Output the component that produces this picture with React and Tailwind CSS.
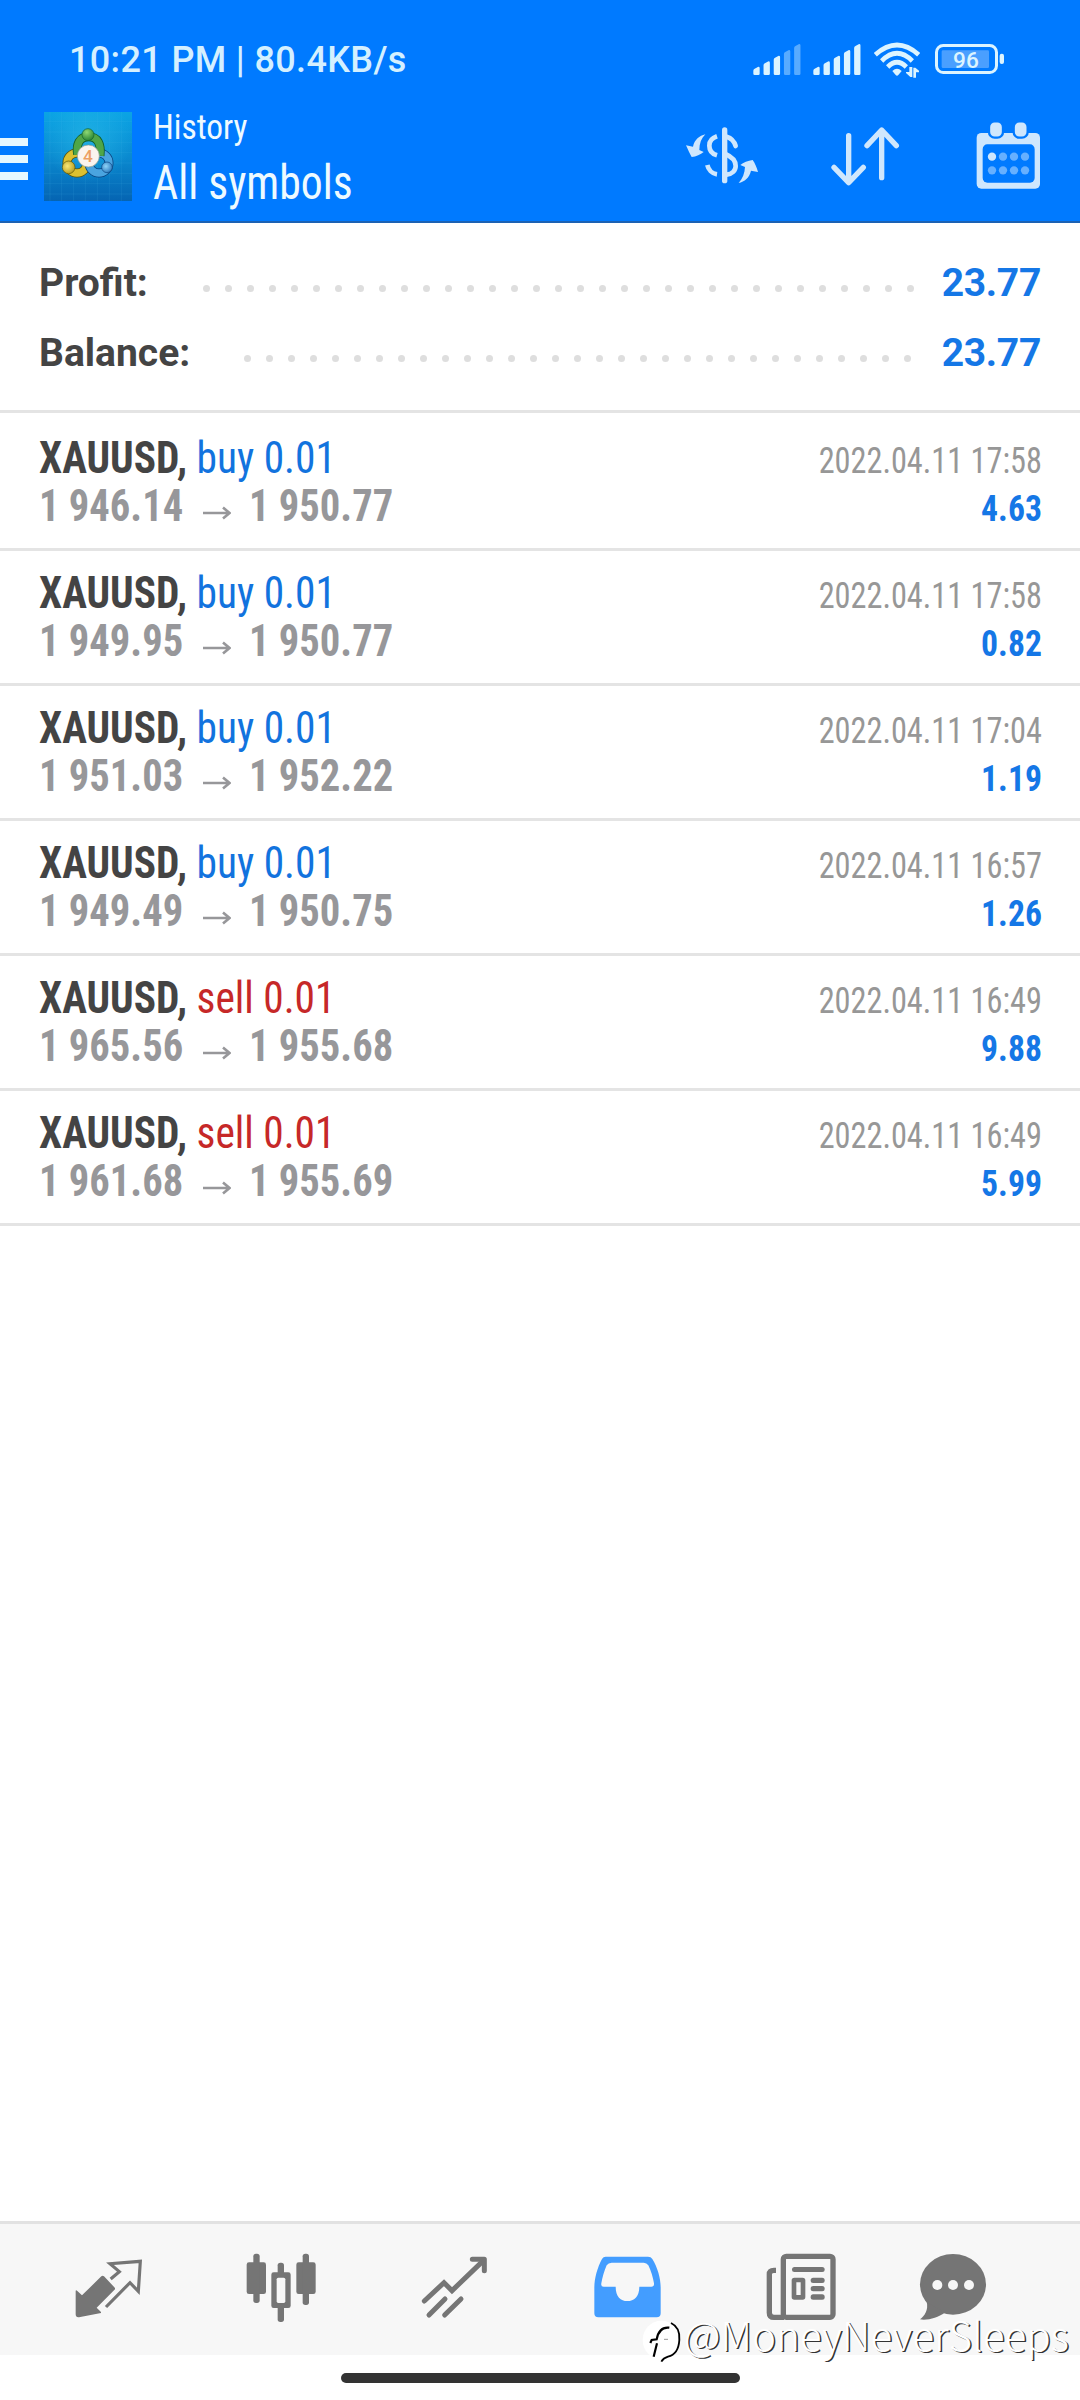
const deals = [
  { type: "buy", from: "1 946.14", to: "1 950.77", time: "2022.04.11 17:58", profit: "4.63" },
  { type: "buy", from: "1 949.95", to: "1 950.77", time: "2022.04.11 17:58", profit: "0.82" },
  { type: "buy", from: "1 951.03", to: "1 952.22", time: "2022.04.11 17:04", profit: "1.19" },
  { type: "buy", from: "1 949.49", to: "1 950.75", time: "2022.04.11 16:57", profit: "1.26" },
  { type: "sell", from: "1 965.56", to: "1 955.68", time: "2022.04.11 16:49", profit: "9.88" },
  { type: "sell", from: "1 961.68", to: "1 955.69", time: "2022.04.11 16:49", profit: "5.99" },
];

/* ================= STATUS ICONS ================= */
function Signal({ level }) {
  const tops = [140, 124, 107, 90, 72];
  return (
    <svg viewBox="279 60 144 120" className="w-[48px] h-[40px] fill-[#dcf4ff]">
      {tops.map((y, i) => {
        const x = 280 + i * 30.6;
        return (
          <path
            key={y}
            d={`M${x} ${y + 12} Q${x} ${y + 8} ${x + 4} ${y + 6} L${x + 15} ${y} Q${x + 19} ${y} ${x + 19} ${y + 4} V161 Q${x + 19} 165 ${x + 15} 165 H${x + 4} Q${x} 165 ${x} 161 Z`}
            opacity={i < level ? 1 : 0.4}
          />
        );
      })}
    </svg>
  );
}

function Wifi() {
  return (
    <svg viewBox="642 60 138 120" className="w-[46px] h-[40px]">
      <g fill="none" stroke="#dcf4ff" strokeWidth="14">
        <path d="M646 104 Q711 46 776 104" />
        <path d="M665 123 Q711 77 757 123" />
        <path d="M683 141 Q711 113 739 141" />
      </g>
      <path d="M697 153 Q711 140 725 153 L715 165 Q711 169 707 165 Z" fill="#dcf4ff" />
      <path d="M757 141 V171 H751 L738 159 V156 H748 V141 Z M760 173 V143 H766 L777 152 V157 H768 V173 Z" fill="#dcf4ff" />
    </svg>
  );
}

function Battery() {
  return (
    <svg viewBox="825 60 210 120" className="w-[70px] h-[40px]">
      <rect x="829.5" y="76.5" width="180" height="81" rx="20" fill="none" stroke="#dcf4ff" strokeWidth="9" />
      <rect x="845" y="91" width="142" height="53" rx="4" fill="#4a9fff" />
      <rect x="1019" y="101" width="13" height="31" rx="6" fill="#dcf4ff" />
      <text x="918" y="143" textAnchor="middle" fontFamily="Roboto" fontWeight="500" fontSize="68" fill="#dcf4ff">
        96
      </text>
    </svg>
  );
}

/* ================= HEADER ICONS ================= */
function AppLogo() {
  return (
    <svg viewBox="42 37 264 267" className="mt-[32px] w-[88px] h-[89px]">
      <defs>
        <linearGradient id="sky" x1="0" y1="0" x2="0" y2="1">
          <stop offset="0" stopColor="#0ba4e4" />
          <stop offset="0.5" stopColor="#0a8ad0" />
          <stop offset="1" stopColor="#0564b2" />
        </linearGradient>
        <radialGradient id="glow" cx="0.5" cy="0.3" r="0.5">
          <stop offset="0" stopColor="#2cbce8" stopOpacity="0.6" />
          <stop offset="1" stopColor="#2cbce8" stopOpacity="0" />
        </radialGradient>
        <radialGradient id="green" cx="0.4" cy="0.3" r="0.8">
          <stop offset="0" stopColor="#8fd873" />
          <stop offset="1" stopColor="#1c7a2c" />
        </radialGradient>
        <radialGradient id="gold" cx="0.4" cy="0.4" r="0.8">
          <stop offset="0" stopColor="#f8e878" />
          <stop offset="1" stopColor="#a88a08" />
        </radialGradient>
        <radialGradient id="blue" cx="0.4" cy="0.4" r="0.8">
          <stop offset="0" stopColor="#8fd4f8" />
          <stop offset="1" stopColor="#1464b0" />
        </radialGradient>
      </defs>
      <rect x="42" y="37" width="264" height="267" fill="url(#sky)" />
      <rect x="42" y="37" width="264" height="267" fill="url(#glow)" />
      <path
        d="M60 37V304 M95 37V304 M131 37V304 M166 37V304 M202 37V304 M238 37V304 M274 37V304 M42 66H306 M42 97H306 M42 128H306 M42 159H306 M42 190H306 M42 221H306 M42 252H306 M42 283H306"
        stroke="#4cc0ec"
        strokeOpacity="0.25"
        strokeWidth="1.5"
      />
      <g fill="none">
        <circle cx="141" cy="190" r="30" stroke="#5c5408" strokeWidth="27" />
        <circle cx="141" cy="190" r="30" stroke="#dcc030" strokeWidth="22" />
        <circle cx="207" cy="190" r="30" stroke="#0a4480" strokeWidth="27" />
        <circle cx="207" cy="190" r="30" stroke="#4aa4e0" strokeWidth="22" />
        <path d="M143 164 C138 134 148 111 176 111 C204 111 214 134 210 168" stroke="#14602c" strokeWidth="27" />
        <path d="M143 164 C138 134 148 111 176 111 C204 111 214 134 210 168" stroke="#4fa648" strokeWidth="22" />
      </g>
      <circle cx="174" cy="105" r="18" fill="url(#green)" stroke="#14602c" strokeWidth="2" />
      <circle cx="116" cy="203" r="19" fill="url(#gold)" stroke="#5c5408" strokeWidth="2" />
      <circle cx="231" cy="203" r="16" fill="url(#blue)" stroke="#0a4480" strokeWidth="2" />
      <circle cx="175" cy="169" r="33" fill="#fbf4ee" stroke="#8c9c90" strokeWidth="2" />
      <text x="174" y="188" textAnchor="middle" fontFamily="Roboto" fontWeight="500" fontSize="52" fill="#eda064">
        4
      </text>
    </svg>
  );
}

function CurrencyIcon() {
  return (
    <svg viewBox="75 285 225 240" className="w-[75px] h-[80px] mt-[35px]">
      <rect x="186" y="322" width="16" height="168" rx="8" fill="#cfe7fd" />
      <g fill="none" stroke="#cfe7fd" strokeWidth="14">
        <path d="M171 349 C153 355 148 366 148 377 C148 391 157 402 171 406" />
        <path d="M142 435 C145 449 156 461 171 463" strokeLinecap="butt" />
        <path d="M200 350 C213 354 223 364 227 378" strokeLinecap="round" />
        <path d="M196 402 C220 412 227 424 227 438 C227 452 216 462 200 464" />
      </g>
      <g fill="#cfe7fd">
        <path d="M136 343 C118 348 104 358 99 380 L78 376 C84 390 90 402 95 411 C108 410 122 404 131 396 L118 390 C118 370 124 355 136 343Z" />
        <path d="M236 489 C254 484 268 474 273 452 L294 456 C290 442 285 430 278 420 C264 422 250 427 241 435 L255 441 C254 460 248 476 236 489Z" />
      </g>
    </svg>
  );
}

function SortIcon() {
  return (
    <svg viewBox="510 285 210 240" className="w-[70px] h-[80px] mt-[35px]">
      <g fill="none" stroke="#cfe7fd" strokeWidth="16" strokeLinecap="round" strokeLinejoin="round">
        <path d="M566 347 V487 M522 442 L566 488 L610 442" />
        <path d="M665 473 V331 M621 377 L665 330 L709 377" />
      </g>
    </svg>
  );
}

function CalendarIcon() {
  return (
    <svg viewBox="945 285 198 240" className="w-[66px] h-[80px] mt-[35px]">
      <rect x="950" y="339" width="190" height="167" rx="14" fill="#cfe7fd" />
      <rect x="968" y="373" width="156" height="115" rx="14" fill="#007aff" />
      <g fill="#cfe7fd" stroke="#007aff" strokeWidth="7">
        <rect x="987" y="304" width="42" height="49" rx="17" />
        <rect x="1061" y="304" width="42" height="49" rx="17" />
      </g>
      {[996, 1029, 1062, 1095].map((x) => (
        <g key={x} fill="#66b0ff">
          <circle cx={x} cy="410" r="12.5" fill={x === 996 ? "#cfe7fd" : "#66b0ff"} />
          <circle cx={x} cy="451" r="12.5" />
        </g>
      ))}
    </svg>
  );
}

/* ================= BOTTOM NAV ICONS ================= */
function QuotesIcon() {
  return (
    <svg viewBox="39 60 216 216" className="size-[72px]">
      <path
        d="M47 184 Q47 178 52 183 L66 196 L124 139 Q128 135 132 139 L165 174 V178 L110 233 L123 246 V249 L57 262 Q47 263 47 253 Z"
        fill="#757575"
      />
      <path d="M152 147 L178 125 L150 101 L241 94 L235 184 L210 158 L138 231" fill="none" stroke="#757575" strokeWidth="9.5" />
    </svg>
  );
}

function ChartIcon() {
  return (
    <svg viewBox="558 60 216 216" className="size-[72px] fill-[#757575]">
      <rect x="560" y="97" width="58" height="95" rx="7" />
      <rect x="580" y="71" width="19" height="148" rx="8" />
      <rect x="709" y="97" width="58" height="95" rx="7" />
      <rect x="728" y="71" width="19" height="154" rx="8" />
      <rect x="653" y="98" width="19" height="178" rx="8" />
      <rect x="634" y="127" width="58" height="107" rx="7" />
      <rect x="650" y="143" width="26" height="76" rx="5" fill="#f7f7f7" />
    </svg>
  );
}

function TradeIcon() {
  return (
    <svg viewBox="1077 60 216 216" className="size-[72px]">
      <g fill="none" stroke="#757575" strokeWidth="15" strokeLinecap="round">
        <path d="M1093 213 L1152 158 L1176 182 L1270 92" />
        <path d="M1107 255 L1155 207 M1154 255 L1203 207" />
        <path d="M1237 88 H1273 V122" strokeLinejoin="round" />
      </g>
    </svg>
  );
}

function HistoryIcon() {
  return (
    <svg viewBox="36 60 216 216" className="size-[72px]">
      <path
        d="M77 80 H204 Q213 80 217 87 C233 113 242 145 242 172 V250 Q242 262 230 262 H55 Q43 262 43 250 V172 C43 145 52 113 66 87 Q70 80 77 80 Z"
        fill="#439dff"
      />
      <path
        d="M95 98 H191 Q200 98 205 106 C213 122 219 142 222 160 Q223 170 214 170 H178 C178 200 162 213 142 213 C122 213 107 200 107 170 H71 Q62 170 64 160 C67 142 73 122 80 106 Q85 98 95 98 Z"
        fill="#f7f7f7"
      />
    </svg>
  );
}

function NewsIcon() {
  return (
    <svg viewBox="555 60 216 216" className="size-[72px]">
      <g fill="none" stroke="#757575" strokeWidth="16">
        <rect x="610" y="79" width="149" height="183" rx="9" />
        <path d="M588 121 H582 Q568 121 568 133 V248 Q568 262 582 262 H612" />
        <rect x="642" y="150" width="27" height="52" rx="1" strokeWidth="14" strokeLinejoin="round" />
      </g>
      <g fill="#757575">
        <rect x="636" y="111" width="98" height="15" rx="7.5" />
        <rect x="692" y="143" width="42" height="16" rx="7.5" />
        <rect x="692" y="168" width="42" height="16" rx="7.5" />
        <rect x="692" y="193" width="42" height="16" rx="7.5" />
      </g>
    </svg>
  );
}

function ChatIcon() {
  return (
    <svg viewBox="1011 60 216 216" className="size-[72px]">
      <ellipse cx="1119" cy="163" rx="99" ry="91" fill="#757575" />
      <path d="M1040 215 C1046 240 1034 257 1020 268 C1044 272 1074 262 1094 248 Z" fill="#757575" />
      <g fill="#f7f7f7">
        <circle cx="1072" cy="165" r="15" />
        <circle cx="1119" cy="165" r="15" />
        <circle cx="1167" cy="165" r="15" />
      </g>
    </svg>
  );
}

/* ================= CONTENT ================= */
function Total({ label, value, dots, wide }) {
  return (
    <div className="flex justify-between h-[70px] px-[39px] text-[39px] leading-[70px] font-bold">
      <span className="text-[#444]">{label}</span>
      <div className="flex">
        <div className="flex gap-[15px] pt-[37px]">
          {Array.from({ length: dots }).map((_, i) => (
            <span key={i} className="size-[7px] rounded-full bg-[#dedede]" />
          ))}
        </div>
        <span className={`tracking-[-0.3px] text-[#1577e6] ${wide ? "ml-[31px]" : "ml-[28px]"}`}>{value}</span>
      </div>
    </div>
  );
}

function Deal({ deal }) {
  return (
    <div className="flex justify-between h-[135px] pt-[18px] pl-[39px] pr-[38px] border-b-[3px] border-[#e4e4e4] font-['Roboto_Condensed'] leading-[48px]">
      <div className="text-[44px]">
        <div className="text-[#444] origin-left scale-x-[0.94]">
          <span className="font-bold">XAUUSD,</span>{" "}
          <span className={deal.type === "buy" ? "text-[#1273de]" : "text-[#c62828]"}>
            {deal.type} 0.01
          </span>
        </div>
        <div className="flex font-bold text-[#97979a]">
          <span className="w-[146px] origin-left scale-x-[0.922]">{deal.from}</span>
          <svg viewBox="0 0 28 14" className="w-[28px] h-[14px] mt-[24px] mx-[18px]">
            <path d="M0 7 H25 M20 1.5 L26.5 7 L20 12.5" fill="none" stroke="#97979a" strokeWidth="2.6" />
          </svg>
          <span className="origin-left scale-x-[0.922]">{deal.to}</span>
        </div>
      </div>
      <div className="pt-[3px] text-right text-[36px]">
        <div className="text-[#979797] origin-right scale-x-[0.897]">{deal.time}</div>
        <div className="font-bold text-[#1577e6] origin-right scale-x-[0.935]">{deal.profit}</div>
      </div>
    </div>
  );
}

export default function App() {
  return (
    <div className="relative flex flex-col w-[1080px] h-[2400px] bg-white font-[Roboto,sans-serif] overflow-hidden whitespace-nowrap">
      {/* HEADER */}
      <header className="h-[223px] bg-[#007aff] border-b-2 border-[#1c62b4]">
        <div className="flex pt-[40px] pl-[69px] h-[80px]">
          <span className="text-[36px] leading-[41px] tracking-[0.35px] font-medium text-[#d4f0ff]">10:21 PM | 80.4KB/s</span>
          <div className="flex ml-auto pr-[75px]">
            <Signal level={3} />
            <div className="ml-[12px]"><Signal level={5} /></div>
            <div className="ml-[13px]"><Wifi /></div>
            <div className="ml-[15px]"><Battery /></div>
          </div>
        </div>

        <div className="flex h-[141px]">
          <div className="flex flex-col gap-[9px] w-[28px] mt-[58px]">
            <span className="h-[8px] bg-[#e6f8ff]" />
            <span className="h-[8px] bg-[#e6f8ff]" />
            <span className="h-[8px] bg-[#e6f8ff]" />
          </div>
          <div className="ml-[16px]"><AppLogo /></div>
          <div className="ml-[21px] pt-[25px] text-[#eefaff] font-['Roboto_Condensed']">
            <div className="text-[35px] leading-[46px] origin-left scale-x-[0.955]">History</div>
            <div className="mt-[4px] text-[48px] leading-[56px] origin-left scale-x-[0.91]">All symbols</div>
          </div>
          <div className="flex ml-auto pr-[39px]">
            <CurrencyIcon />
            <div className="ml-[70px]"><SortIcon /></div>
            <div className="ml-[75px]"><CalendarIcon /></div>
          </div>
        </div>
      </header>

      {/* TOTALS */}
      <section className="h-[190px] pt-[25px] border-b-[3px] border-[#e4e4e4]">
        <Total label="Profit:" value="23.77" dots={33} />
        <Total label="Balance:" value="23.77" dots={31} wide />
      </section>

      {/* DEALS */}
      <main className="flex-1 pt-[3px]">
        {deals.map((d, i) => (
          <Deal key={i} deal={d} />
        ))}
      </main>

      {/* BOTTOM NAV */}
      <nav className="flex gap-[101px] h-[134px] pt-[26px] pl-[73px] bg-[#f7f7f7] border-t-[3px] border-[#e2e2e2]">
        <QuotesIcon />
        <ChartIcon />
        <TradeIcon />
        <HistoryIcon />
        <NewsIcon />
        <div className="-ml-[21px]"><ChatIcon /></div>
      </nav>
      <div className="flex h-[45px] pt-[18px] justify-center">
        <span className="w-[399px] h-[10px] rounded-full bg-[#333]" />
      </div>

      {/* WATERMARK */}
      <div className="absolute left-[642px] top-[2316px] flex">
        <svg viewBox="6 78 120 150" className="w-[40px] h-[50px]">
          <ellipse cx="64" cy="150" rx="56" ry="58" fill="#fff" />
          <g fill="none" stroke="#000">
            <path d="M93 99 C112 108 120 125 118 150 C116 182 102 196 84 200 C74 203 68 208 64 215" strokeWidth="5.5" />
            <path d="M41 200 L51 160 M31 159 L35 150 L50 148 C54 126 64 110 88 113" strokeWidth="6.5" />
            <path d="M72 148 H84" strokeWidth="3" stroke="#999" />
          </g>
        </svg>
        <span className="ml-[2px] -mt-[4px] text-[40px] leading-[44px] tracking-[0.2px] font-light text-white font-['Noto_Sans_CJK_SC'] [text-shadow:1.5px_1px_0.5px_#333]">
          @MoneyNeverSleeps
        </span>
      </div>
    </div>
  );
}
